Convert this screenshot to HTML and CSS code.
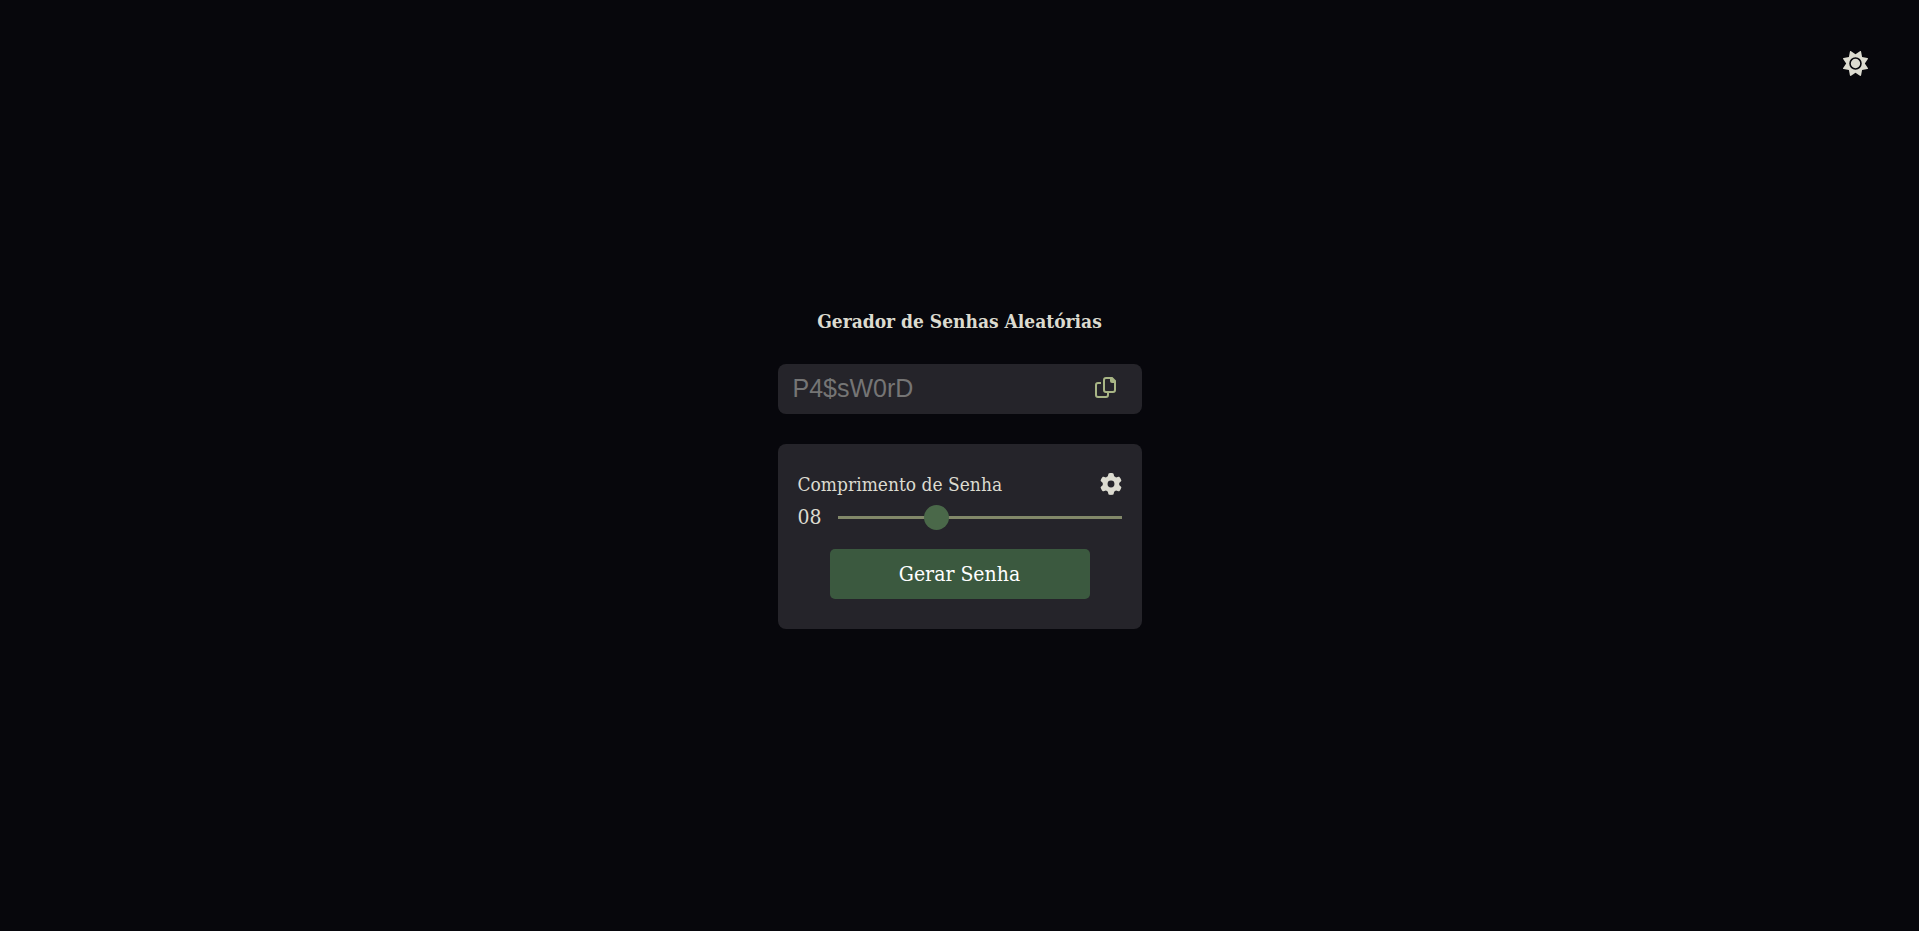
FILE: index.html
```html
<!DOCTYPE html>
<html lang="pt-BR">
<head>
<meta charset="utf-8">
<meta name="viewport" content="width=device-width, initial-scale=1">
<title>Gerador de Senhas Aleatórias</title>
<link rel="stylesheet" href="styles.css">
</head>
<body>
<button class="icon-button theme-toggle" type="button" aria-label="Alternar tema">
  <svg viewBox="0 0 512 512" aria-hidden="true"><path d="M361.500 1.200c5 2.100 8.600 6.600 9.600 11.900L391 121l107.900 19.800c5.300 1 9.800 4.600 11.900 9.600s1.500 10.700-1.600 15.200L446.900 256l62.300 90.300c3.100 4.500 3.700 10.200 1.600 15.200s-6.600 8.600-11.900 9.600L391 391 371.100 498.900c-1 5.300-4.600 9.800-9.600 11.900s-10.700 1.500-15.200-1.600L256 446.900l-90.300 62.300c-4.500 3.100-10.200 3.700-15.200 1.600s-8.600-6.600-9.600-11.900L121 391 13.100 371.100c-5.300-1-9.800-4.600-11.900-9.600s-1.500-10.700 1.600-15.200L65.100 256 2.800 165.700c-3.100-4.500-3.700-10.200-1.600-15.200s6.600-8.600 11.900-9.600L121 121 140.900 13.100c1-5.300 4.600-9.800 9.600-11.900s10.700-1.500 15.200 1.600L256 65.100 346.300 2.800c4.500-3.100 10.200-3.700 15.200-1.600zM160 256a96 96 0 1 1 192 0 96 96 0 1 1-192 0zm224 0a128 128 0 1 0-256 0 128 128 0 1 0 256 0z"/></svg>
</button>
<main class="generator">
  <h1 class="title">Gerador de Senhas Aleatórias</h1>
  <div class="password">
    <input class="password-input" type="text" placeholder="P4$sW0rD" aria-label="Senha gerada" readonly>
    <button class="icon-button copy" type="button" aria-label="Copiar senha">
      <svg viewBox="0 0 21 21" aria-hidden="true"><path class="copy-line" d="M6 6H3Q1 6 1 8v10q0 2 2 2h8q2 0 2-2v-2M11 1h6l3 3v9q0 2-2 2h-7q-2 0-2-2V3q0-2 2-2z"/><path class="copy-fold" d="M15 1h2l3 3v2h-3q-2 0-2-2z"/></svg>
    </button>
  </div>
  <section class="panel">
    <div class="panel-head">
      <label class="label" for="length">Comprimento de Senha</label>
      <button class="icon-button settings" type="button" aria-label="Configurações">
        <svg viewBox="0 0 512 512" aria-hidden="true"><path d="M495.900 166.600c3.200 8.700.5 18.400-6.400 24.600l-43.300 39.400c1.100 8.300 1.700 16.800 1.700 25.400s-.6 17.100-1.700 25.400l43.300 39.400c6.900 6.200 9.600 15.900 6.400 24.600-4.400 11.900-9.700 23.300-15.800 34.300l-4.700 8.100c-6.600 11-14 21.400-22.100 31.200-5.900 7.200-15.700 9.600-24.500 6.800l-55.700-17.700c-13.400 10.300-28.200 18.900-44 25.400l-12.500 57.100c-2 9.100-9 16.300-18.200 17.800-13.800 2.300-28 3.500-42.500 3.500s-28.700-1.200-42.500-3.500c-9.200-1.500-16.200-8.700-18.200-17.800l-12.500-57.100c-15.800-6.500-30.600-15.100-44-25.400L83.100 425.900c-8.800 2.800-18.600.3-24.500-6.800-8.100-9.800-15.500-20.200-22.100-31.200l-4.700-8.100c-6.100-11-11.400-22.400-15.800-34.300-3.200-8.700-.5-18.400 6.400-24.600l43.300-39.400C64.600 273.100 64 264.600 64 256s.6-17.100 1.700-25.400L22.400 191.200c-6.900-6.200-9.600-15.900-6.400-24.600 4.400-11.900 9.700-23.300 15.800-34.300l4.700-8.100c6.600-11 14-21.400 22.100-31.200 5.900-7.200 15.700-9.600 24.500-6.800l55.700 17.700c13.400-10.300 28.200-18.900 44-25.400l12.500-57.100c2-9.100 9-16.300 18.200-17.800C227.300 1.200 241.500 0 256 0s28.700 1.200 42.500 3.500c9.200 1.500 16.200 8.700 18.200 17.800l12.500 57.100c15.800 6.500 30.600 15.100 44 25.400l55.700-17.700c8.800-2.800 18.600-.3 24.500 6.800 8.100 9.800 15.500 20.200 22.100 31.200l4.700 8.100c6.100 11 11.400 22.400 15.800 34.300zM256 336a80 80 0 1 0 0-160 80 80 0 1 0 0 160z"/></svg>
      </button>
    </div>
    <div class="length-row">
      <output class="value" for="length">08</output>
      <input class="slider" id="length" type="range" min="4" max="16" value="8">
    </div>
    <button class="generate" type="button">Gerar Senha</button>
  </section>
</main>
</body>
</html>
```
FILE: styles.css
```css
* {
  box-sizing: border-box;
  margin: 0;
  padding: 0;
}

body {
  min-height: 100vh;
  display: flex;
  align-items: center;
  justify-content: center;
  background: #07070c;
  color: #dcdbd0;
  font-family: "DejaVu Serif Condensed", "DejaVu Serif", serif;
}

.icon-button {
  display: flex;
  border: 0;
  background: none;
  color: #dcdbd0;
  cursor: pointer;
}

.icon-button svg {
  width: 100%;
  fill: currentColor;
}

.theme-toggle {
  position: absolute;
  top: 51px;
  right: 51px;
  width: 25px;
}

.generator {
  width: 364px;
  max-width: 100%;
}

.title {
  margin-bottom: 25px;
  font-size: 19px;
  line-height: 36px;
  text-align: center;
}

.password {
  display: flex;
  align-items: center;
  height: 50px;
  margin-bottom: 30px;
  padding: 0 26px 0 15px;
  border-radius: 8px;
  background: #25242a;
}

.password-input {
  flex: 1;
  min-width: 0;
  border: 0;
  outline: 0;
  background: none;
  color: #dcdbd0;
  font: 25px "Liberation Sans", sans-serif;
}

.password-input::placeholder {
  color: #757575;
}

.copy {
  width: 21px;
  margin-bottom: 3px;
}

.copy .copy-line {
  fill: none;
  stroke: #a8b585;
  stroke-width: 2;
}

.copy .copy-fold {
  fill: #a8b585;
}

.panel {
  padding: 25px 20px 30px;
  border-radius: 8px;
  background: #25242a;
}

.panel-head {
  display: flex;
  align-items: center;
  justify-content: space-between;
  height: 30px;
}

.label {
  font-size: 19px;
}

.settings {
  width: 22px;
}

.length-row {
  display: flex;
  align-items: center;
  gap: 16px;
  height: 37px;
  margin-bottom: 13px;
}

.value {
  font-size: 21px;
}

.slider {
  flex: 1;
  min-width: 0;
  height: 3px;
  appearance: none;
  background: #828869;
}

.slider::-webkit-slider-thumb {
  appearance: none;
  width: 25px;
  height: 25px;
  border-radius: 50%;
  background: #4a6849;
}

.generate {
  display: block;
  width: 260px;
  max-width: 100%;
  height: 50px;
  margin: 0 auto;
  border: 0;
  border-radius: 5px;
  background: #3b593f;
  color: #fff;
  font: 21px "DejaVu Serif Condensed", "DejaVu Serif", serif;
  cursor: pointer;
}
```
